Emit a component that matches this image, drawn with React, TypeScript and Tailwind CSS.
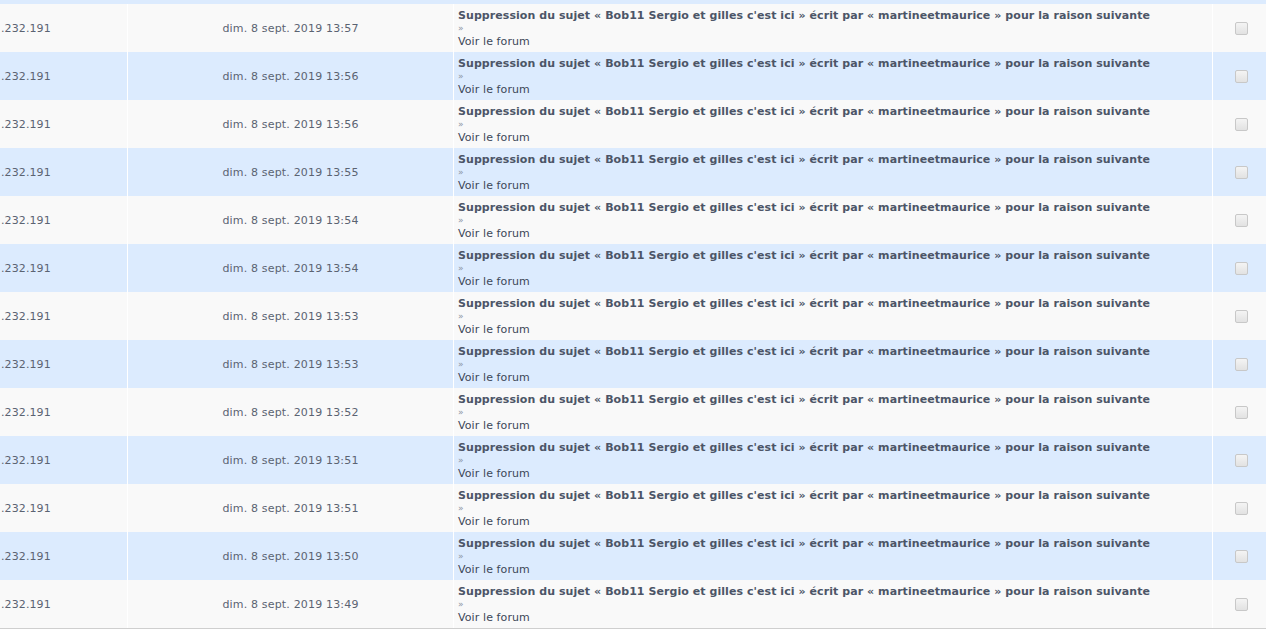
import React from "react";

const times = ["13:57","13:56","13:56","13:55","13:54","13:54","13:53","13:53","13:52","13:51","13:51","13:50","13:49"];

export default function App() {
  return (
    <div
      className="w-[1266px] h-[632px] overflow-hidden bg-white text-[11px] leading-[13px] text-[#5b6372]"
      style={{ fontFamily: '"DejaVu Sans", Verdana, sans-serif' }}
    >
      <div className="h-[4px] bg-[#dcebfe]" />
      <div className="border-b border-[#cfcfcf]">
        {times.map((t, i) => (
          <div
            key={i}
            className={`flex h-[48px] ${i % 2 === 0 ? "bg-[#f9f9f9]" : "bg-[#dcebfe]"}`}
          >
            <div className="w-[128px] shrink-0 border-r border-white flex items-center pl-[1px] tracking-[0.1px]">
              .232.191
            </div>
            <div className="w-[326px] shrink-0 border-r border-white flex items-center justify-center tracking-[0.17px]">
              dim. 8 sept. 2019 {t}
            </div>
            <div className="w-[759px] shrink-0 border-r border-white flex flex-col justify-center pl-[4px]">
              <div className="font-bold whitespace-nowrap text-[#4c5567] tracking-[0.065px]">
                Suppression du sujet « Bob11 Sergio et gilles c'est ici » écrit par « martineetmaurice » pour la raison suivante
              </div>
              <div className="text-[9px] text-[#8a93a3]">»</div>
              <div className="text-[#3d4758] tracking-[0.1px]">Voir le forum</div>
            </div>
            <div className="flex-1 flex items-center justify-center pl-[4px]">
              <div className="w-[13px] h-[13px] rounded-[2px] border border-[#c8c8c8] bg-gradient-to-b from-[#f4f4f4] to-[#e2e2e2]" />
            </div>
          </div>
        ))}
      </div>
    </div>
  );
}
